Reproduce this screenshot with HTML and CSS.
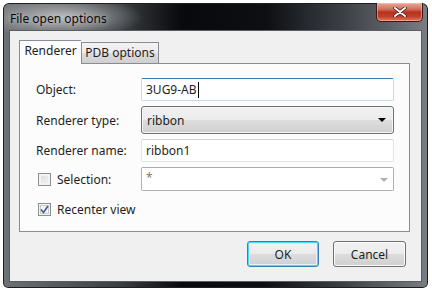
FILE: index.html
```html
<!DOCTYPE html>
<html>
<head>
<meta charset="utf-8">
<link rel="stylesheet" href="styles.css">
</head>
<body>
<div class="window">
  <div class="titlebar">
    <span class="title">File open options</span>
    <div class="close">
      <svg width="14" height="10" viewBox="0 0 14 10"><path d="M2 1 L12 9 M12 1 L2 9" stroke="#3a1010" stroke-width="3.4" stroke-linecap="round"/><path d="M2 1 L12 9 M12 1 L2 9" stroke="#fff" stroke-width="2" stroke-linecap="round"/></svg>
    </div>
  </div>
  <div class="client">
    <div class="tabs">
      <div class="tab active">Renderer</div>
      <div class="tab">PDB options</div>
    </div>
    <div class="panel">
      <div class="form">
        <label class="lbl">Object:</label>
        <div class="field focus">3UG9-AB<span class="caret"></span></div>

        <label class="lbl">Renderer type:</label>
        <div class="combo">ribbon<span class="arrow"></span></div>

        <label class="lbl">Renderer name:</label>
        <div class="field">ribbon1</div>

        <label class="lbl chk"><span class="box"></span>Selection:</label>
        <div class="field combo-edit"><span class="star">*</span><span class="arrow grey"></span></div>

        <label class="lbl chk wide"><span class="box checked"><svg width="9" height="9" viewBox="0 0 9 9"><path d="M1 4.5 L3.5 7.5 L8 1" fill="none" stroke="#3d5a9e" stroke-width="1.6"/></svg></span>Recenter view</label>
      </div>
    </div>
    <div class="buttons">
      <button class="btn default">OK</button>
      <button class="btn cancel">Cancel</button>
    </div>
  </div>
</div>
</body>
</html>
```

FILE: styles.css
```css
html, body {
  margin: 0;
  padding: 0;
  background: #ffffff;
}
body {
  font-family: "Noto Sans", "Open Sans", sans-serif;
  font-size: 12px;
  color: #1e1e1e;
}
.window {
  margin: 3px 0 0 3px;
  width: 425px;
  height: 285px;
  box-sizing: border-box;
  padding: 0 6px 6px 6px;
  border-radius: 6px 6px 5px 5px;
  background:
    radial-gradient(ellipse 80px 22px at 60px 14px, rgba(200,202,205,0.85), rgba(200,202,205,0) 100%),
    linear-gradient(90deg, #6f7275 0%, #3a3d41 28%, #08090c 42%, #0d0f13 62%, #3c4044 80%, #7a7e82 100%);
  box-shadow: inset 0 0 0 1px #1c1e22;
}
.titlebar {
  height: 27px;
  display: flex;
  align-items: flex-start;
}
.title {
  margin: 8px 0 0 1px;
  line-height: 16px;
  color: #0a0a0a;
  text-shadow: 0 0 6px rgba(230,230,230,0.9);
}
.close {
  margin-left: auto;
  margin-right: -1px;
  width: 47px;
  height: 19px;
  box-sizing: border-box;
  border: 1px solid #3a1a18;
  border-top: none;
  border-radius: 0 0 5px 5px;
  background: linear-gradient(180deg, #e8a89a 0%, #d0705e 35%, #b8321e 50%, #c2402a 75%, #e07a5c 100%);
  display: flex;
  align-items: center;
  justify-content: center;
  box-shadow: inset 0 0 0 1px rgba(255,200,190,0.5);
}
.client {
  height: 252px;
  box-sizing: border-box;
  background: #f0f0f0;
  border: 1px solid #5a5d60;
  padding: 9px 15px 0 9px;
  display: flex;
  flex-direction: column;
}
.tabs {
  display: flex;
  align-items: flex-end;
  height: 23px;
  position: relative;
  z-index: 1;
}
.tab {
  box-sizing: border-box;
  height: 21px;
  padding: 0;
  border: 1px solid #898c95;
  border-bottom: none;
  background: linear-gradient(180deg, #f3f3f3 0%, #ebebeb 50%, #dddddd 51%, #cfcfcf 100%);
  line-height: 20px;
  width: 78px;
  text-align: center;
  white-space: nowrap;
}
.tab.active {
  height: 24px;
  margin-bottom: -1px;
  width: 62px;
  background: #fcfcfc;
  border-right: none;
  line-height: 20px;
}
.panel {
  width: 391px;
  height: 169px;
  box-sizing: border-box;
  border: 1px solid #898c95;
  background: #fcfcfc;
  padding: 14px 15px 0 16px;
}
.form {
  display: grid;
  grid-template-columns: 105px 253px;
  grid-template-rows: 23px 28px 23px 24px 20px;
  row-gap: 5px;
  align-items: center;
}
.form .lbl:last-child { margin-top: 6px; }
.lbl {
  display: flex;
  align-items: center;
  white-space: nowrap;
}
.lbl.wide { grid-column: 1 / 3; }
.lbl.chk .box {
  margin: 0 6px 0 2px;
}
.box {
  width: 13px;
  height: 13px;
  box-sizing: border-box;
  border: 1px solid #8e8f8f;
  background: linear-gradient(135deg, #dcdcdc 0%, #f4f4f4 100%);
  box-shadow: inset 0 0 0 2px #f4f4f4;
  display: flex;
  align-items: center;
  justify-content: center;
}
.box.checked {
  background: #f4f4f4;
  box-shadow: inset 0 0 0 1px #f4f4f4, inset 0 0 0 2px #c8cbd0;
}
.field {
  height: 100%;
  box-sizing: border-box;
  border: 1px solid #e2e3ea;
  border-top-color: #d0d3d8;
  border-radius: 2px;
  background: #ffffff;
  padding: 0 4px;
  display: flex;
  align-items: center;
  position: relative;
}
.field.focus {
  border-color: #c5daed;
  border-top-color: #3d7bad;
}
.caret {
  display: inline-block;
  width: 1px;
  height: 16px;
  background: #000;
  margin-left: 1px;
}
.combo-edit {
  border-color: #adb2b5;
  border-top-color: #abadb3;
}
.star { color: #8a7a6a; margin-top: -3px; }
.combo {
  height: 100%;
  box-sizing: border-box;
  border: 1px solid #707070;
  border-radius: 3px;
  background: linear-gradient(180deg, #f2f2f2 0%, #ebebeb 50%, #dddddd 51%, #cfcfcf 100%);
  box-shadow: inset 0 0 0 1px #f6f6f6;
  padding: 0 5px;
  display: flex;
  align-items: center;
  position: relative;
}
.arrow {
  margin-left: auto;
  margin-right: 2px;
  width: 0;
  height: 0;
  border-left: 4px solid transparent;
  border-right: 4px solid transparent;
  border-top: 4px solid #000;
}
.arrow.grey {
  border-top-color: #aeb0b3;
  margin-right: 1px;
  margin-top: 2px;
}
.buttons {
  margin-top: 9px;
  display: flex;
  justify-content: flex-end;
  gap: 14px;
}
.btn {
  font-family: inherit;
  font-size: 12px;
  color: #1e1e1e;
  height: 26px;
  box-sizing: border-box;
  border-radius: 3px;
  padding: 0;
  border: 1px solid #707070;
  background: linear-gradient(180deg, #f2f2f2 0%, #ebebeb 50%, #dddddd 51%, #cfcfcf 100%);
  box-shadow: inset 0 0 0 1px #fbfbfb;
}
.btn.default {
  width: 72px;
  border-color: #3c7fb1;
  box-shadow: inset 0 0 0 1px #48d8fb, inset 0 0 0 2px #dff3fc;
}
.btn.cancel { width: 73px; }
```
